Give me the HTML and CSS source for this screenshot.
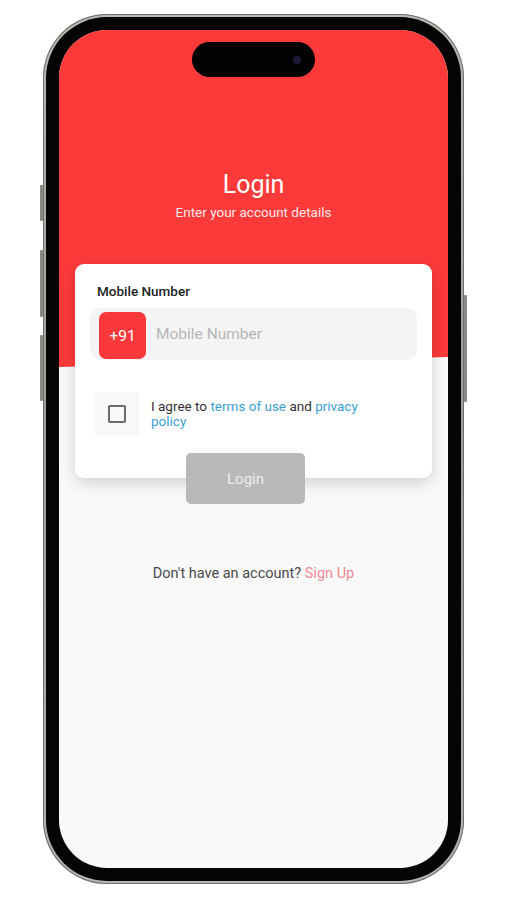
FILE: index.html
```html
<!DOCTYPE html>
<html>
<head>
<meta charset="utf-8">
<link rel="stylesheet" href="styles.css">
</head>
<body>
<div class="frame">
  <span class="side side-l1"></span>
  <span class="side side-l2"></span>
  <span class="side side-l3"></span>
  <span class="side side-r1"></span>
  <div class="bezel">
    <div class="screen">
      <div class="hero">
        <div class="island"><span class="cam"></span></div>
        <h1 class="title">Login</h1>
        <p class="subtitle">Enter your account details</p>
      </div>
      <div class="card">
        <div class="label">Mobile Number</div>
        <div class="input">
          <div class="code">+91</div>
          <div class="placeholder">Mobile Number</div>
        </div>
        <div class="agree">
          <div class="check-wrap"><span class="check"></span></div>
          <p class="agree-text">I agree to <span class="link">terms of use</span> and <span class="link">privacy policy</span></p>
        </div>
      </div>
      <div class="btn">Login</div>
      <p class="footer">Don't have an account? <span class="signup">Sign Up</span></p>
    </div>
  </div>
</div>
</body>
</html>
```

FILE: styles.css
```css
html, body {
  margin: 0;
  padding: 0;
  background: #ffffff;
}
body {
  padding: 14px 0 0 43px;
  font-family: Roboto, "Liberation Sans", sans-serif;
}
.frame {
  position: relative;
  width: 421px;
  height: 870px;
  box-sizing: border-box;
  padding: 3px;
  border-radius: 64px;
  background: linear-gradient(180deg, #b9b9b3, #9c9c98 50%, #b5b5b0);
  box-shadow: inset 0 0 0 1px #6f6f6c;
}
.side {
  position: absolute;
  width: 3px;
  background: #8a8a86;
  border-radius: 1px;
}
.side-l1 { left: -3px; top: 171px; height: 36px; }
.side-l2 { left: -3px; top: 236px; height: 67px; }
.side-l3 { left: -3px; top: 321px; height: 66px; }
.side-r1 { right: -3px; top: 281px; height: 107px; }
.bezel {
  height: 100%;
  box-sizing: border-box;
  padding: 13px;
  border-radius: 61px;
  background: #050505;
}
.screen {
  position: relative;
  width: 389px;
  height: 838px;
  border-radius: 48px;
  overflow: hidden;
  background: #f9f9f9;
}
.hero {
  height: 337px;
  box-sizing: border-box;
  padding-top: 12px;
  background: #fc3a3a;
  clip-path: polygon(0 0, 100% 0, 100% 327px, 0 337px);
  text-align: center;
}
.island {
  position: relative;
  width: 123px;
  height: 35px;
  margin: 0 auto;
  border-radius: 18px;
  background: #020205;
}
.cam {
  position: absolute;
  left: 101px;
  top: 14px;
  width: 8px;
  height: 8px;
  border-radius: 50%;
  background: #1b1b33;
}
.title {
  margin: 93px 0 0;
  font-size: 25px;
  line-height: 30px;
  font-weight: 400;
  color: #ffffff;
}
.subtitle {
  margin: 4px 0 0;
  font-size: 13.5px;
  line-height: 16px;
  color: #fde8e8;
}
.card {
  margin: -103px 16px 0;
  height: 214px;
  box-sizing: border-box;
  padding: 19px 15px 0;
  background: #ffffff;
  border-radius: 9px;
  box-shadow: 0 5px 16px rgba(0, 0, 0, 0.16);
  position: relative;
}
.label {
  padding-left: 7px;
  font-size: 13.5px;
  line-height: 16px;
  font-weight: 500;
  color: #1e1e1e;
}
.input {
  display: flex;
  align-items: flex-start;
  margin-top: 9px;
  height: 52px;
  box-sizing: border-box;
  padding: 4px 0 0 9px;
  border-radius: 11px;
  background: #f4f4f4;
}
.code {
  width: 47px;
  height: 47px;
  border-radius: 7px;
  background: #f8383a;
  color: #ffffff;
  font-size: 15.5px;
  display: flex;
  align-items: center;
  justify-content: center;
}
.placeholder {
  margin-left: 10px;
  height: 44px;
  display: flex;
  align-items: center;
  font-size: 15.5px;
  color: #b7b7b7;
}
.agree {
  display: flex;
  align-items: center;
  margin-top: 32px;
  padding-left: 5px;
}
.check-wrap {
  width: 44px;
  height: 43px;
  background: #f8f8f8;
  display: flex;
  align-items: center;
  justify-content: center;
  flex-shrink: 0;
}
.check {
  width: 14px;
  height: 14px;
  border: 2px solid #6a6a6a;
  border-radius: 2px;
}
.agree-text {
  margin: 0 0 0 12px;
  width: 226px;
  font-size: 13.5px;
  line-height: 15px;
  color: #333333;
}
.link {
  color: #3b9fd2;
}
.btn {
  position: relative;
  margin: -25px 0 0 127px;
  width: 119px;
  height: 51px;
  border-radius: 5px;
  background: #b9b9b9;
  color: #ececec;
  font-size: 15px;
  display: flex;
  align-items: center;
  justify-content: center;
}
.footer {
  margin: 61px 0 0;
  text-align: center;
  font-size: 14.5px;
  line-height: 18px;
  color: #4a4a4a;
  font-weight: 400;
}
.signup {
  color: #ec8a96;
}
```
